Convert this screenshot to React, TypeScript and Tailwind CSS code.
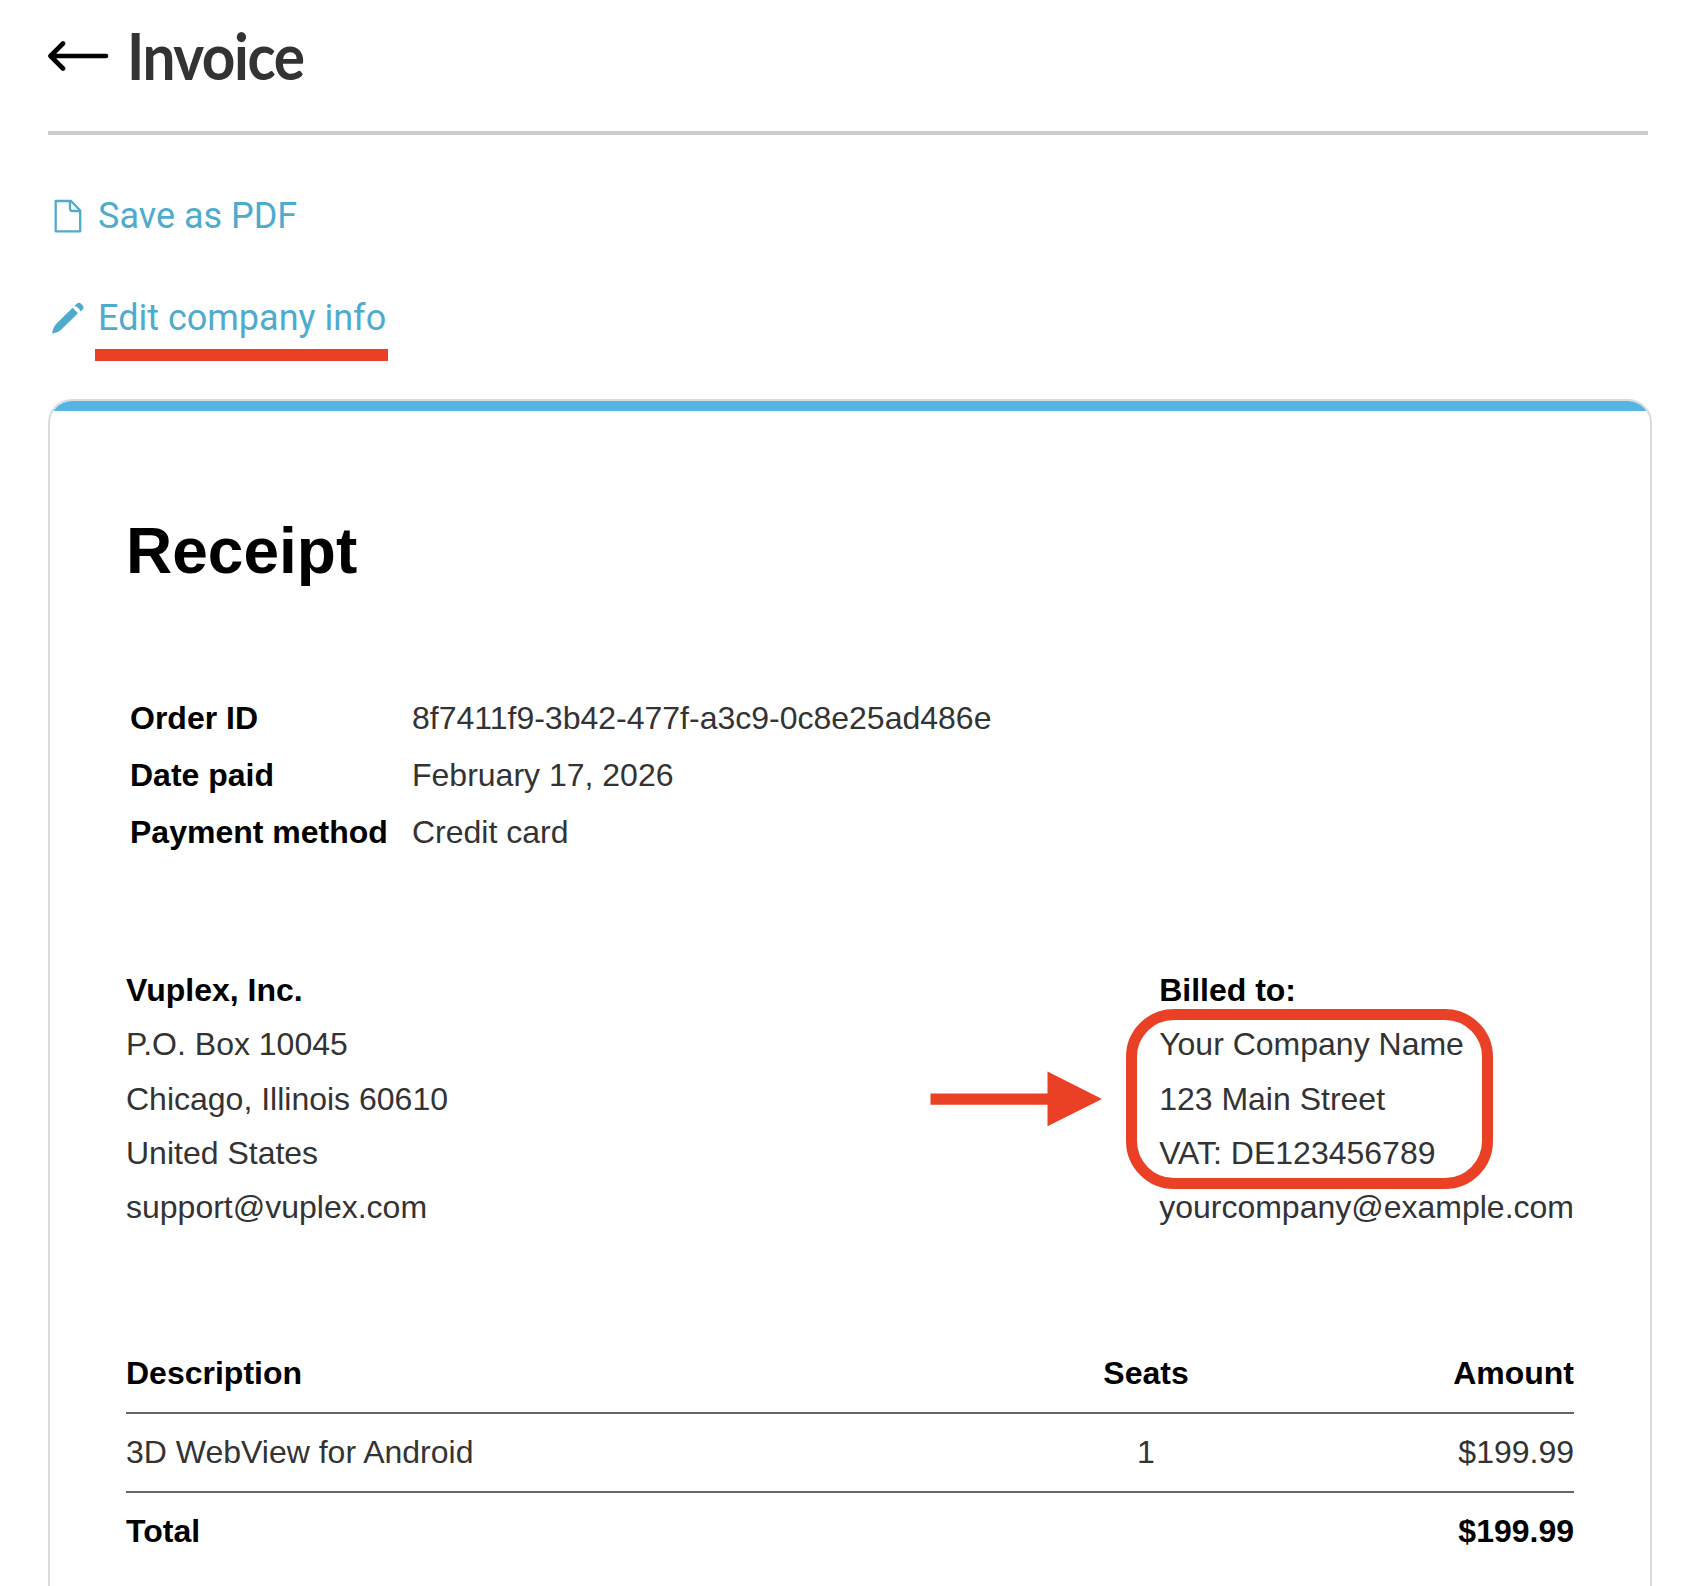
import React from 'react';

const orderDetails = [
  { label: 'Order ID', value: '8f7411f9-3b42-477f-a3c9-0c8e25ad486e' },
  { label: 'Date paid', value: 'February 17, 2026' },
  { label: 'Payment method', value: 'Credit card' },
];

const seller = ['P.O. Box 10045', 'Chicago, Illinois 60610', 'United States', 'support@vuplex.com'];
const buyer = ['Your Company Name', '123 Main Street', 'VAT: DE123456789', 'yourcompany@example.com'];

function BackArrow() {
  return (
    <svg width="62" height="32" viewBox="0 0 62 32" fill="none" stroke="#000" strokeWidth="4.6" strokeLinecap="round" strokeLinejoin="round">
      <path d="M2.5 16H58M15 3.5L2.5 16L15 28.5" />
    </svg>
  );
}

function FileIcon() {
  return (
    <svg width="36" height="36" viewBox="0 0 36 36" fill="none" stroke="currentColor" strokeWidth="2.3" strokeLinejoin="round">
      <path d="M5.7 3H21L30.2 12.5V33.3H5.7Z" />
      <path d="M20 3V10.5Q20 13 22.5 13H30" />
    </svg>
  );
}

function PencilIcon() {
  return (
    <svg width="36" height="36" viewBox="0 0 36 36" fill="currentColor">
      <path d="M22.6 7.8L28 13.2L10.6 30.2Q8 32.4 2.8 33.4Q2 33.4 2.2 32.6Q3.4 27.4 5.6 24.6Z" />
      <path d="M24.6 5.8L27 3.4Q29 1.8 31.6 4.2Q34.6 7 33 9.2L30.4 11.6Q29 7.2 24.6 5.8Z" />
    </svg>
  );
}

function OrderTable() {
  return (
    <dl className="mt-[85px] ml-1 grid grid-cols-[282px_1fr] leading-[57px]">
      {orderDetails.map((row) => (
        <React.Fragment key={row.label}>
          <dt className="font-bold text-black">{row.label}</dt>
          <dd>{row.value}</dd>
        </React.Fragment>
      ))}
    </dl>
  );
}

function Address({ title, lines }: { title: string; lines: string[] }) {
  return (
    <div>
      <p className="font-bold text-black">{title}</p>
      {lines.map((line) => (
        <p key={line}>{line}</p>
      ))}
    </div>
  );
}

export default function App() {
  return (
    <div className="relative h-[1586px] w-[1697px] overflow-hidden bg-white pl-12 text-[#333]">
      <header className="flex h-[131px] items-start">
        <div className="mt-10">
          <BackArrow />
        </div>
        <h1 className="mt-4 ml-[17px] origin-left scale-x-[0.9] font-['Lato',sans-serif] text-[65px] leading-[78px] font-bold tracking-[-1.6px]">
          Invoice
        </h1>
      </header>
      <div className="h-1 w-[1600px] bg-[#ccc]" />

      <nav className="mt-[54px] flex flex-col items-start gap-12 font-['Roboto',sans-serif] text-[36px] leading-[54px] text-[#4fabcd]">
        <a className="ml-0.5 flex items-center gap-3">
          <FileIcon />
          Save as PDF
        </a>
        <a className="ml-0.5 flex items-center gap-3">
          <PencilIcon />
          <span className="relative">
            Edit company info
            <span className="absolute top-[58px] left-[-3px] h-[11.5px] w-[293px] bg-[#ea4025]" />
          </span>
        </a>
      </nav>

      <main className="mt-[54px] h-[1300px] w-[1604px] overflow-hidden rounded-3xl border-2 border-[#d9dbdc] font-['Liberation_Sans',Arial,sans-serif] text-[32px]">
        <div className="h-2.5 bg-[#54b5e3]" />
        <div className="px-[76px] pt-[86px]">
          <h2 className="text-[64px] leading-[108px] font-bold text-black">Receipt</h2>

          <OrderTable />

          <section className="mt-[101.8px] flex justify-between leading-[54.4px]">
            <Address title="Vuplex, Inc." lines={seller} />
            <div className="relative">
              <Address title="Billed to:" lines={buyer} />
              {/* highlight around the company lines */}
              <div className="absolute top-[46px] left-[-33px] h-[180px] w-[367px] rounded-[48px] border-[11px] border-[#ea4025]" />
              <svg className="absolute top-[108px] left-[-229px]" width="172" height="56" viewBox="0 0 172 56" fill="#ea4025">
                <path d="M0.5 22.5H117.5V0.5L172 28L117.5 55.2V33.8H0.5Z" />
              </svg>
            </div>
          </section>

          <section className="mt-[100.2px] leading-[77px]">
            <div className="grid grid-cols-[920px_200px_1fr] border-b-2 border-[#666] font-bold text-black">
              <span>Description</span>
              <span className="text-center">Seats</span>
              <span className="text-right">Amount</span>
            </div>
            <div className="grid grid-cols-[920px_200px_1fr] border-b-2 border-[#666]">
              <span>3D WebView for Android</span>
              <span className="text-center">1</span>
              <span className="text-right">$199.99</span>
            </div>
            <div className="flex justify-between font-bold text-black">
              <span>Total</span>
              <span>$199.99</span>
            </div>
          </section>
        </div>
      </main>
    </div>
  );
}
